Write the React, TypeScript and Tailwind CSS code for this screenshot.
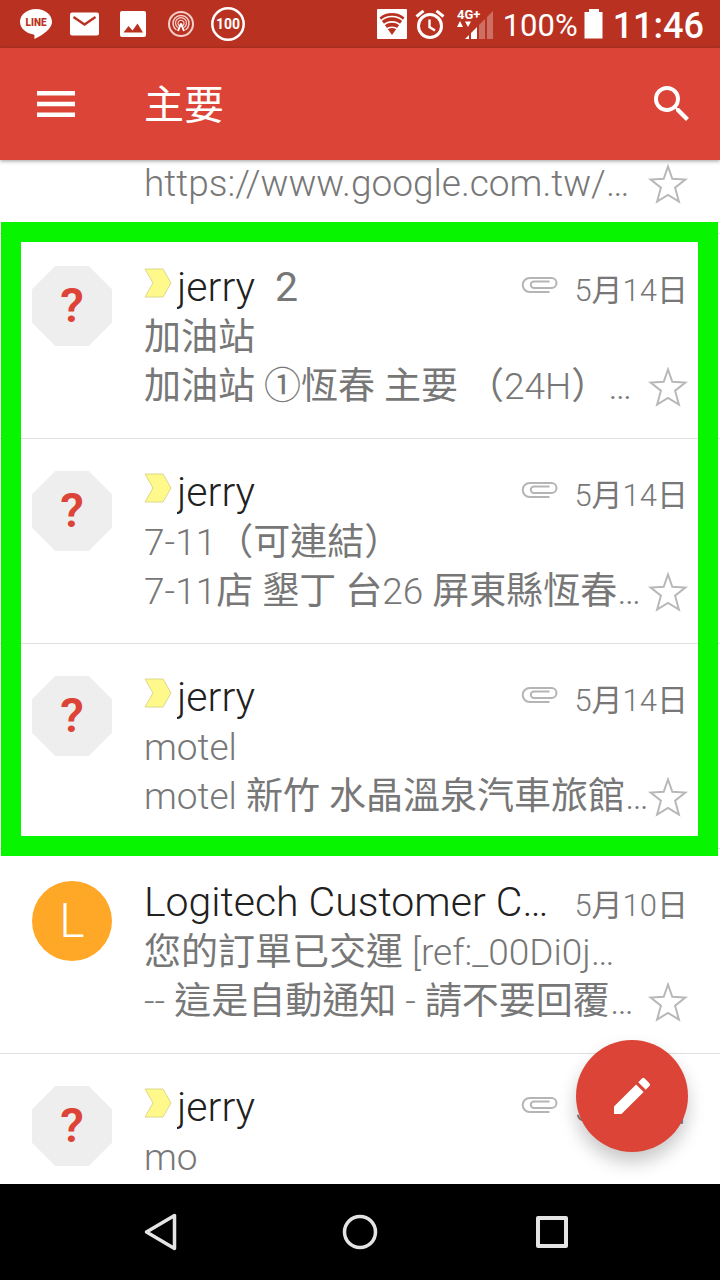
import { MdEdit, MdSearch } from "react-icons/md";
import { clsx } from "clsx";

type Mail = {
  id: number;
  sender: string;
  count?: number;
  date: string;
  subject: string;
  snippet?: string;
  important?: boolean;
  attachment?: boolean;
  initial?: string;
};

const boxedMails: Mail[] = [
  { id: 1, sender: "jerry", count: 2, date: "5月14日", subject: "加油站", snippet: "加油站 ①恆春 主要 （24H）…", important: true, attachment: true },
  { id: 2, sender: "jerry", date: "5月14日", subject: "7-11（可連結）", snippet: "7-11店 墾丁 台26 屏東縣恆春…", important: true, attachment: true },
  { id: 3, sender: "jerry", date: "5月14日", subject: "motel", snippet: "motel 新竹 水晶溫泉汽車旅館…", important: true, attachment: true },
];

const otherMails: Mail[] = [
  { id: 4, sender: "Logitech Customer C…", date: "5月10日", subject: "您的訂單已交運 [ref:_00Di0j…", snippet: "-- 這是自動通知 - 請不要回覆…", initial: "L" },
  { id: 5, sender: "jerry", date: "5月10日", subject: "mo", important: true, attachment: true },
];

// latin is set light, CJK glyphs stay at regular weight
function Mixed({ text }: { text: string }) {
  return (
    <>
      {text.split(/([\u2460-\uffee]+)/).map((part, i) =>
        i % 2 ? <span key={i} className="font-normal">{part}</span> : part
      )}
    </>
  );
}

function StatusBar() {
  return (
    <div className="flex h-12 shrink-0 items-center justify-between bg-[#b93221] pr-4 pl-5 text-white">
      <div className="flex items-center">
        <svg className="mr-[18px] h-8 w-8" viewBox="0 0 32 32">
          <path d="M16 1C7.200 1 0 6.600 0 13.800c0 6.300 5.800 11.600 13.600 12.700 1.300.2.900 2 .7 4.500 5-2.200 17.700-9 17.700-17.200C32 6.600 24.800 1 16 1z" fill="#fff" />
          <text x="16" y="18" textAnchor="middle" fontSize="10" fontWeight="900" fontFamily="Roboto, sans-serif" fill="#b93221">LINE</text>
        </svg>
        <svg className="mr-5 h-6 w-[30px]" viewBox="0 0 30 24">
          <rect x="0" y="0.500" width="29" height="23" rx="2" fill="#fff" />
          <path d="M3.500 5l11 7.500L25.500 5" fill="none" stroke="#b93221" strokeWidth="2.400" />
        </svg>
        <svg className="mr-[21px] h-[26px] w-[26px]" viewBox="0 0 26 26">
          <rect width="26" height="26" rx="2" fill="#fff" />
          <path d="M3.500 21.500L8.500 15l4 4.500 5-7 5.500 9z" fill="#b93221" />
        </svg>
        <svg className="mr-4 h-7 w-7" viewBox="0 0 28 28" fill="none" stroke="#f6cfca">
          <circle cx="14" cy="14" r="12" strokeWidth="2" />
          <path d="M9.500 20a8 8 0 1 1 9 0" strokeWidth="1.500" />
          <path d="M10.800 17.500a5.500 5.500 0 1 1 6.400 0" strokeWidth="1.300" />
          <path d="M12 15.500a3 3 0 1 1 4 0" strokeWidth="1.200" />
          <path d="M14 13.500L11 21M14 13.500l3 7.500" stroke="#fff" strokeWidth="2" />
        </svg>
        <svg className="h-[34px] w-[34px]" viewBox="0 0 34 34">
          <circle cx="17" cy="17" r="15.700" fill="none" stroke="#fff" strokeWidth="2.500" />
          <text x="17" y="22" textAnchor="middle" fontSize="14" fontWeight="700" fontFamily="Roboto, sans-serif" fill="#fff">100</text>
        </svg>
      </div>

      <div className="flex items-center">
        <svg className="mr-2 h-[30px] w-[30px]" viewBox="0 0 30 30">
          <rect width="30" height="30" rx="1" fill="#fff" />
          <path d="M2.500 8.500a20 20 0 0 1 25 0L15 26z" fill="#b93221" />
          <path d="M3 12.500a17 17 0 0 1 24 0M6 16.500a13 13 0 0 1 18 0M9 20.500a9 9 0 0 1 12 0" fill="none" stroke="#fff" strokeWidth="1.600" />
        </svg>
        <svg className="mr-3 h-[30px] w-[30px]" viewBox="0 0 30 30" fill="none" stroke="#fff">
          <circle cx="15" cy="17" r="11.500" strokeWidth="3" />
          <path d="M1.500 7.500L8.500 1.800M28.500 7.500L21.500 1.800" strokeWidth="3" />
          <path d="M14.500 10.500v7.500l5.500 3.500" strokeWidth="2.400" />
        </svg>
        <svg className="mr-[9px] h-8 w-[37px]" viewBox="0 0 37 32">
          <text x="0" y="11" fontSize="13" fontWeight="700" fontFamily="Roboto, sans-serif" fill="#fff">4G+</text>
          <path d="M0 19l3-6 3 6zM8 13.500h6l-3 5.500z" fill="#fff" />
          <path d="M8 31l4-4v4zM14 25l6-6v12h-6z" fill="#fff" />
          <path d="M22 17l6-6v20h-6zM30 9l6-6v28h-6z" fill="#fff" fillOpacity="0.300" />
        </svg>
        <span className="pt-1 text-[31px] leading-8">100%</span>
        <svg className="mr-[9px] ml-[6px] h-[30px] w-5" viewBox="0 0 20 30">
          <path d="M5 0h10v3h3.500v26.500H0.500V3H5z" fill="#fff" />
        </svg>
        <span className="pt-1 text-[36px] leading-9 font-medium">11:46</span>
      </div>
    </div>
  );
}

function AppBar() {
  return (
    <header className="z-20 flex h-28 shrink-0 items-center bg-[#db4437] px-6 text-white shadow-[0_1px_4px_rgba(0,0,0,0.4)]">
      <button aria-label="選單" className="flex h-16 w-16 items-center justify-center">
        <svg className="h-[26px] w-[38px]" viewBox="0 0 38 26" fill="#fff">
          <path d="M0 0h38v4.500H0zM0 10.800h38v4.500H0zM0 21.500h38V26H0z" />
        </svg>
      </button>
      <h1 className="ml-14 flex-1 pt-1 text-[40px] leading-[56px] font-normal">主要</h1>
      <button aria-label="搜尋">
        <MdSearch className="h-12 w-12" />
      </button>
    </header>
  );
}

function Star() {
  return (
    <button aria-label="加星號" className="shrink-0">
      <svg className="h-10 w-10" viewBox="0 0 40 40" fill="none" stroke="#b8b8b8" strokeWidth="2">
        <path d="M20 2.500l4.300 12.300 13 .7-10.200 8.200 3.800 13.800L20 31 9.100 37.500l3.800-13.800L2.700 15.500l13-.7z" />
      </svg>
    </button>
  );
}

function ImportantMarker() {
  return (
    <svg className="mr-[5px] mb-2 h-[30px] w-7 shrink-0" viewBox="0 0 28 30">
      <path d="M1 1h18l8 14-8 14H1l8-14z" fill="#fff98b" stroke="#dcd88c" />
    </svg>
  );
}

function Paperclip() {
  return (
    <svg className="mb-1 h-[18px] w-[37px] shrink-0" viewBox="0 0 37 18" fill="none" stroke="#b5b5b5" strokeWidth="2">
      <path d="M28.500 16H8.700a7 7 0 0 1 0-14H30.500a5 5 0 0 1 0 10H13a3.200 3.200 0 0 1 0-6.400h15.500" />
    </svg>
  );
}

function Avatar({ initial }: { initial?: string }) {
  return (
    <div
      className={clsx(
        "flex h-20 w-20 shrink-0 items-center justify-center text-5xl",
        initial
          ? "rounded-full bg-[#ffa726] font-light text-white"
          : "bg-[#eeeeee] font-semibold text-[#db4437] [clip-path:polygon(29%_0,71%_0,100%_29%,100%_71%,71%_100%,29%_100%,0_71%,0_29%)]"
      )}
    >
      {initial ?? "?"}
    </div>
  );
}

function MailRow({ mail }: { mail: Mail }) {
  return (
    <li className="flex h-[205px] gap-8 border-b border-[#e0e0e0] pt-8 pr-8 pl-8">
      <Avatar initial={mail.initial} />
      <div className="-mt-[5px] min-w-0 flex-1">
        <div className="flex h-[52px] items-center">
          {mail.important && <ImportantMarker />}
          <span className="truncate text-[41px] leading-[52px] font-light text-[#212121]">{mail.sender}</span>
          {mail.count && <span className="ml-5 text-[41px] leading-[52px] text-[#777777]">{mail.count}</span>}
          <div className="ml-auto flex shrink-0 items-center gap-4">
            {mail.attachment && <Paperclip />}
            <time className="pt-2 text-[31px] leading-9 font-light text-[#777777]"><Mixed text={mail.date} /></time>
          </div>
        </div>
        <p className="h-[49px] text-[37px] leading-[49px] font-light whitespace-nowrap text-[#777777]"><Mixed text={mail.subject} /></p>
        {mail.snippet && (
          <div className="flex h-[49px] items-center">
            <p className="min-w-0 flex-1 text-[37px] leading-[49px] font-light whitespace-nowrap text-[#777777]"><Mixed text={mail.snippet} /></p>
            <Star />
          </div>
        )}
      </div>
    </li>
  );
}

export default function App() {
  return (
    <div lang="zh-Hant" className="flex h-screen flex-col overflow-hidden bg-white font-[Roboto,'Noto_Sans_CJK_TC',sans-serif]">
      <StatusBar />
      <AppBar />

      <main className="relative min-h-0 flex-1 overflow-hidden">
        {/* tail of the mail scrolled under the app bar */}
        <div className="h-[74px] border-b border-[#e0e0e0] pr-8 pl-36">
          <div className="flex h-[47px] items-center">
            <p className="min-w-0 flex-1 text-[37px] leading-[47px] font-light whitespace-nowrap text-[#777777]">https://www.google.com.tw/…</p>
            <Star />
          </div>
        </div>

        <div className="relative">
          <ul>
            {boxedMails.map((m) => <MailRow key={m.id} mail={m} />)}
          </ul>
          <div className="pointer-events-none absolute -top-3 right-0.5 -bottom-[7px] left-px z-10 border-[20px] border-[#08f500]" />
        </div>

        <ul>
          {otherMails.map((m) => <MailRow key={m.id} mail={m} />)}
        </ul>

        <button aria-label="撰寫" className="absolute right-8 bottom-8 z-20 flex h-28 w-28 items-center justify-center rounded-full bg-[#db4437] text-white shadow-[0_10px_18px_rgba(0,0,0,0.22)]">
          <MdEdit className="h-12 w-12" />
        </button>
      </main>

      <nav className="flex h-24 shrink-0 items-center justify-center gap-[144px] bg-black">
        <button aria-label="返回">
          <svg className="h-12 w-12" viewBox="0 0 48 48" fill="none" stroke="#e4e4e4" strokeWidth="3.500" strokeLinejoin="round">
            <path d="M30.500 7.500v33L2.500 24z" />
          </svg>
        </button>
        <button aria-label="主畫面">
          <svg className="h-12 w-12" viewBox="0 0 48 48" fill="none" stroke="#e4e4e4" strokeWidth="3.500">
            <circle cx="24" cy="24" r="15.500" />
          </svg>
        </button>
        <button aria-label="總覽">
          <svg className="h-12 w-12" viewBox="0 0 48 48" fill="none" stroke="#e4e4e4" strokeWidth="4" strokeLinejoin="round">
            <path d="M10 10h28v28H10z" />
          </svg>
        </button>
      </nav>
    </div>
  );
}
